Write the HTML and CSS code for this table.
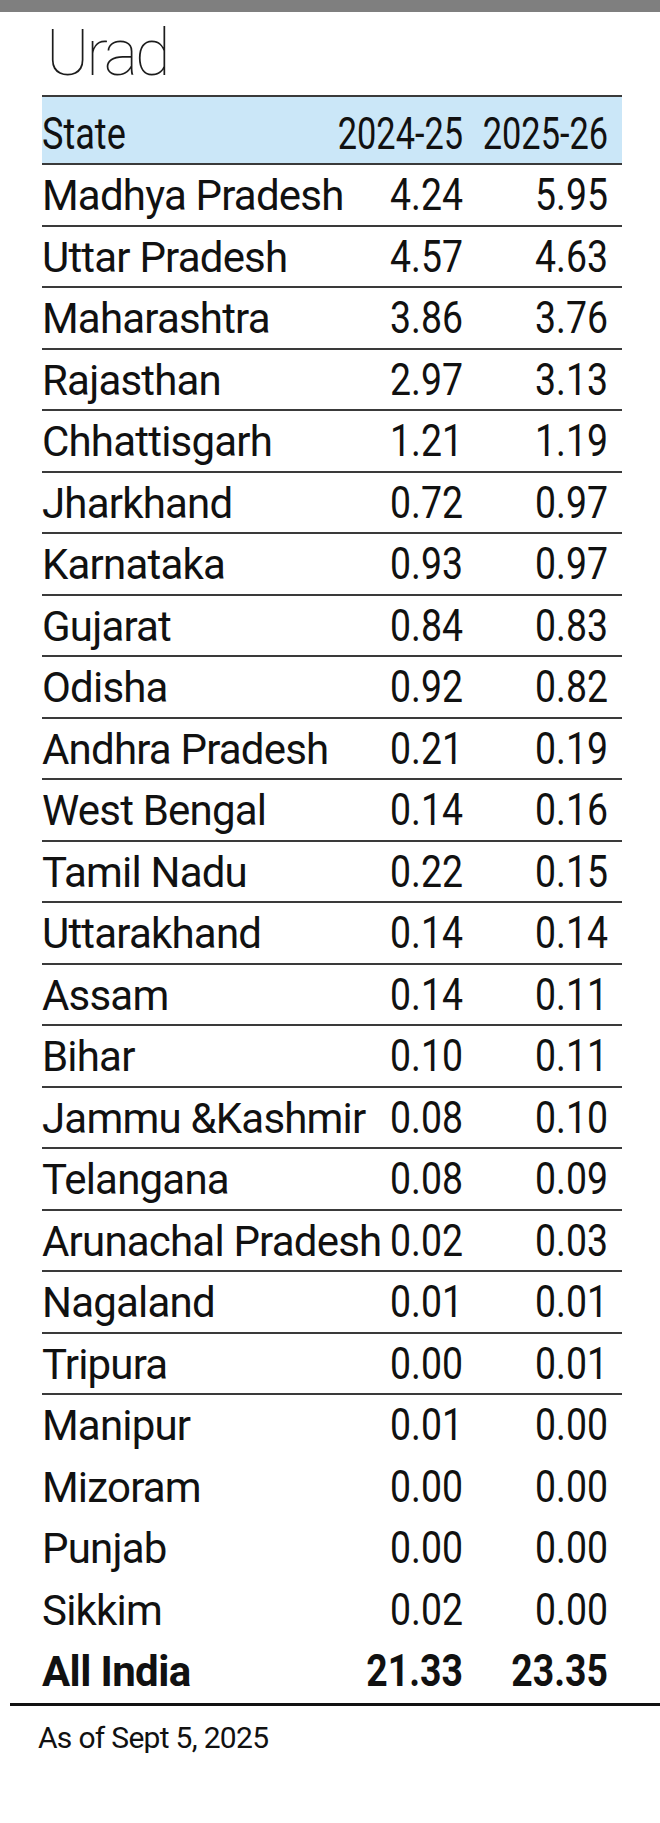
FILE: index.html
```html
<!DOCTYPE html>
<html lang="en">
<head>
<meta charset="utf-8">
<title>Urad</title>
<link rel="stylesheet" href="styles.css">
</head>
<body>
<div class="topbar"></div>
<h1 class="title">Urad</h1>
<div class="table">
  <div class="head">
    <span class="name">State</span>
    <span class="num">2024-25</span>
    <span class="num">2025-26</span>
  </div>
  <div class="row"><span class="name">Madhya Pradesh</span><span class="num">4.24</span><span class="num">5.95</span></div>
  <div class="row"><span class="name">Uttar Pradesh</span><span class="num">4.57</span><span class="num">4.63</span></div>
  <div class="row"><span class="name">Maharashtra</span><span class="num">3.86</span><span class="num">3.76</span></div>
  <div class="row"><span class="name">Rajasthan</span><span class="num">2.97</span><span class="num">3.13</span></div>
  <div class="row"><span class="name">Chhattisgarh</span><span class="num">1.21</span><span class="num">1.19</span></div>
  <div class="row"><span class="name">Jharkhand</span><span class="num">0.72</span><span class="num">0.97</span></div>
  <div class="row"><span class="name">Karnataka</span><span class="num">0.93</span><span class="num">0.97</span></div>
  <div class="row"><span class="name">Gujarat</span><span class="num">0.84</span><span class="num">0.83</span></div>
  <div class="row"><span class="name">Odisha</span><span class="num">0.92</span><span class="num">0.82</span></div>
  <div class="row"><span class="name">Andhra Pradesh</span><span class="num">0.21</span><span class="num">0.19</span></div>
  <div class="row"><span class="name">West Bengal</span><span class="num">0.14</span><span class="num">0.16</span></div>
  <div class="row"><span class="name">Tamil Nadu</span><span class="num">0.22</span><span class="num">0.15</span></div>
  <div class="row"><span class="name">Uttarakhand</span><span class="num">0.14</span><span class="num">0.14</span></div>
  <div class="row"><span class="name">Assam</span><span class="num">0.14</span><span class="num">0.11</span></div>
  <div class="row"><span class="name">Bihar</span><span class="num">0.10</span><span class="num">0.11</span></div>
  <div class="row"><span class="name">Jammu &amp;Kashmir</span><span class="num">0.08</span><span class="num">0.10</span></div>
  <div class="row"><span class="name">Telangana</span><span class="num">0.08</span><span class="num">0.09</span></div>
  <div class="row"><span class="name">Arunachal Pradesh</span><span class="num">0.02</span><span class="num">0.03</span></div>
  <div class="row"><span class="name">Nagaland</span><span class="num">0.01</span><span class="num">0.01</span></div>
  <div class="row"><span class="name">Tripura</span><span class="num">0.00</span><span class="num">0.01</span></div>
  <div class="row plain"><span class="name">Manipur</span><span class="num">0.01</span><span class="num">0.00</span></div>
  <div class="row plain"><span class="name">Mizoram</span><span class="num">0.00</span><span class="num">0.00</span></div>
  <div class="row plain"><span class="name">Punjab</span><span class="num">0.00</span><span class="num">0.00</span></div>
  <div class="row plain"><span class="name">Sikkim</span><span class="num">0.02</span><span class="num">0.00</span></div>
  <div class="row plain total"><span class="name">All India</span><span class="num">21.33</span><span class="num">23.35</span></div>
</div>
<div class="rule"></div>
<p class="note">As of Sept 5, 2025</p>
</body>
</html>
```

FILE: styles.css
```css
html, body {
  margin: 0;
  padding: 0;
  background: #ffffff;
}

body {
  width: 660px;
  color: #111111;
  font-family: Roboto, "Liberation Sans", sans-serif;
}

.topbar {
  height: 12px;
  background: #7f7f7f;
}

.title {
  margin: 0 0 9px 46px;
  padding-top: 9px;
  font-family: Roboto, "Liberation Sans", sans-serif;
  font-weight: 100;
  font-size: 65px;
  line-height: 65px;
  letter-spacing: -3px;
  color: #1c1c1c;
}

.table {
  margin-left: 42px;
  width: 580px;
}

.head,
.row {
  display: grid;
  grid-template-columns: minmax(0, 1fr) 145px 145px;
  box-sizing: border-box;
}

.head {
  height: 70px;
  padding: 15px 0 7px;
  border-top: 2px solid #3a3a3a;
  border-bottom: 2px solid #3a3a3a;
  background: #cbe7f8;
  font-size: 44px;
  line-height: 44px;
}

.head .name {
  transform: scaleX(0.82);
  transform-origin: 0 50%;
}

.head .num {
  transform: scaleX(0.78);
}

.row {
  height: 61.5px;
  border-bottom: 2px solid #3a3a3a;
  line-height: 59.5px;
  padding-top: 1px;
}

.row.plain {
  border-bottom-color: transparent;
}

.name {
  white-space: nowrap;
  overflow: visible;
}

.row .name {
  font-size: 42px;
  letter-spacing: -0.8px;
}

.num {
  display: flex;
  justify-content: flex-end;
  padding-right: 14px;
  white-space: nowrap;
  transform-origin: calc(100% - 14px) 50%;
}

.row .num {
  font-size: 44px;
  transform: scaleX(0.85);
}

.total .name,
.total .num {
  font-weight: 700;
}

.total .name {
  letter-spacing: -0.6px;
}

.rule {
  margin-left: 10px;
  height: 3px;
  background: #111111;
}

.note {
  margin: 17px 0 0 38px;
  font-size: 30px;
  line-height: 30px;
  letter-spacing: -0.7px;
  color: #111111;
}
```
